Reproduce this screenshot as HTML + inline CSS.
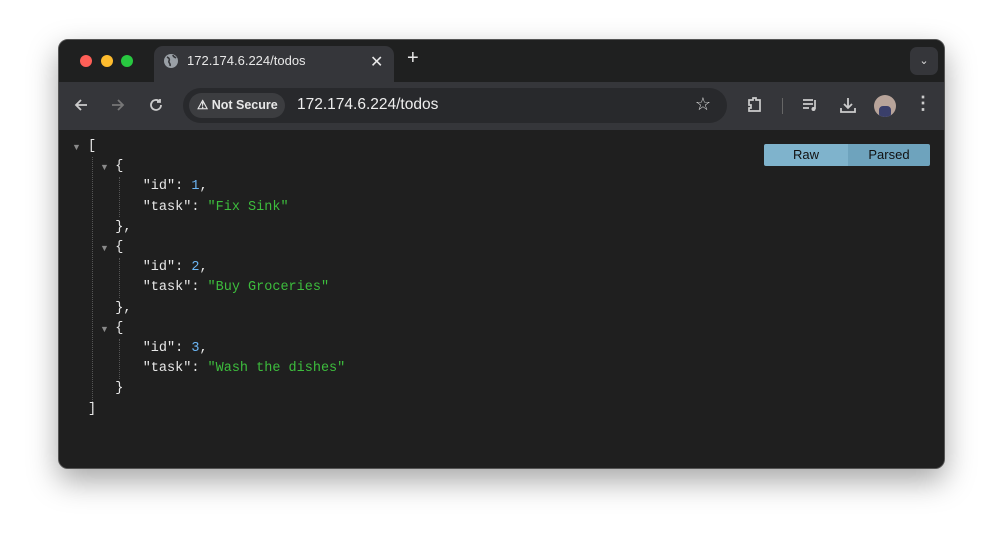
<!DOCTYPE html><html><head><style>
body{margin:0;width:1003px;height:546px;background:#fff;position:relative;overflow:hidden;font-family:"Liberation Sans",sans-serif}
.win{position:absolute;left:58px;top:39px;width:887px;height:430px;border-radius:10px;background:#1f1f1f;overflow:hidden;box-shadow:0 12px 30px rgba(0,0,0,.35);border:1px solid #555;box-sizing:border-box}
.tabbar{position:absolute;left:0;top:0;right:0;height:42px;background:#1f2020}
.dot{position:absolute;top:15px;width:12px;height:12px;border-radius:50%}
.tab{position:absolute;left:95px;top:6px;width:240px;height:36px;background:#35363a;border-radius:9px 9px 0 0;color:#e8e8e8;font-size:13px}
.tool{position:absolute;left:0;top:42px;right:0;height:48px;background:#35363a}
.omni{position:absolute;left:124px;top:6px;width:544px;height:35px;border-radius:18px;background:#28292c}
.ns{position:absolute;left:6px;top:5px;width:96px;height:25px;border-radius:13px;background:#3c3d40;color:#e8e8e8;font-size:12.5px;font-weight:bold;line-height:25px}
.content{position:absolute;left:0;top:90px;right:0;bottom:0;background:#1f1f1f}
pre{margin:0;position:absolute;left:29px;top:7px;font-family:"Liberation Mono",monospace;font-size:13.5px;line-height:20.2px;color:#e8e8e8}
.n{color:#6cb6f5}.s{color:#3dbd3d}
.tri{position:absolute;color:#8a8a8a;font-size:9px}
.vl{position:absolute;border-left:1px dotted #555}
.btn{position:absolute;top:14px;height:22px;background:#6ea3bd;color:#111;font-size:13px;line-height:22px;text-align:center}
svg{position:absolute}
</style></head><body>
<div class="win">
<div class="tabbar">
<div class="dot" style="left:21px;background:#fe5f57"></div>
<div class="dot" style="left:42px;background:#febc2e"></div>
<div class="dot" style="left:62px;background:#28c840"></div>
<div class="tab">
<svg style="left:9px;top:7px" width="16" height="16" viewBox="0 0 16 16"><circle cx="8" cy="8" r="7" fill="#9aa0a6"/><path d="M4 4c2 1 3 2 2 4s2 2 1 5M10 2c0 2 2 2 3 3" stroke="#35363a" stroke-width="1.6" fill="none"/></svg>
<span style="position:absolute;left:33px;top:7px">172.174.6.224/todos</span>
<span style="position:absolute;left:216px;top:6px;font-size:16px">✕</span>
</div>
<span style="position:absolute;left:348px;top:7px;color:#e8e8e8;font-size:20px">+</span>
<div style="position:absolute;left:851px;top:7px;width:28px;height:28px;border-radius:7px;background:#35363a;color:#ddd;text-align:center;font-size:11px;line-height:28px">&#8964;</div>
</div>
<div class="tool">
<svg style="left:14px;top:15px" width="16" height="16" viewBox="0 0 16 16"><path d="M14 8H3M8 3L3 8l5 5" stroke="#ccc" stroke-width="1.8" fill="none"/></svg>
<svg style="left:51px;top:15px" width="16" height="16" viewBox="0 0 16 16"><path d="M2 8h11M8 3l5 5-5 5" stroke="#777" stroke-width="1.8" fill="none"/></svg>
<svg style="left:89px;top:15px" width="16" height="16" viewBox="0 0 16 16"><path d="M13 8a5 5 0 1 1-1.5-3.6M12 2v3H9" stroke="#ccc" stroke-width="1.8" fill="none"/></svg>
<div class="omni"><div class="ns"><span style="margin-left:8px">⚠</span> Not Secure</div>
<span style="position:absolute;left:114px;top:8px;color:#eee;font-size:15.5px">172.174.6.224/todos</span>
<span style="position:absolute;right:16px;top:6px;color:#ddd;font-size:18px">☆</span></div>
<svg style="left:686px;top:13px" width="20" height="20" viewBox="0 0 20 20"><path d="M4 5h4V3h3v2h4v11H4v-3h2v-3H4z" stroke="#ccc" stroke-width="1.7" fill="none"/></svg>
<div style="position:absolute;left:723px;top:16px;width:1px;height:16px;background:#666"></div>
<svg style="left:742px;top:14px" width="18" height="18" viewBox="0 0 18 18"><path d="M2 4h10M2 8h10M2 12h6M14 4v9" stroke="#ccc" stroke-width="1.7" fill="none"/><circle cx="12.5" cy="13" r="2" fill="#ccc"/></svg>
<svg style="left:779px;top:13px" width="20" height="20" viewBox="0 0 20 20"><path d="M10 3v10M6 9l4 4 4-4M3 13v4h14v-4" stroke="#ccc" stroke-width="1.8" fill="none"/></svg>
<div style="position:absolute;left:815px;top:13px;width:22px;height:22px;border-radius:50%;background:#b8a49a;overflow:hidden"><div style="position:absolute;left:5px;top:11px;width:12px;height:12px;background:#3a3f6a;border-radius:4px"></div></div>
<span style="position:absolute;left:855px;top:11px;color:#ccc;font-size:18px;font-weight:bold">⋮</span>
</div>
<div class="content">
<div class="btn" style="left:705px;width:84px;border-radius:2px 0 0 2px;background:#7fb3cc">Raw</div>
<div class="btn" style="left:789px;width:82px;border-radius:0 2px 2px 0">Parsed</div>
<span class="tri" style="left:13px;top:12px">▼</span>
<span class="tri" style="left:41px;top:32px">▼</span>
<span class="tri" style="left:41px;top:113px">▼</span>
<span class="tri" style="left:41px;top:194px">▼</span>
<div class="vl" style="left:33px;top:27px;height:253px"></div>
<div class="vl" style="left:60px;top:47px;height:40px"></div>
<div class="vl" style="left:60px;top:128px;height:40px"></div>
<div class="vl" style="left:60px;top:209px;height:40px"></div>
<pre>[
<span style="margin-left:3px"></span>   {
<span style="margin-left:-2px"></span>       "id": <span class="n">1</span>,
<span style="margin-left:-2px"></span>       "task": <span class="s">"Fix Sink"</span>
<span style="margin-left:3px"></span>   },
<span style="margin-left:3px"></span>   {
<span style="margin-left:-2px"></span>       "id": <span class="n">2</span>,
<span style="margin-left:-2px"></span>       "task": <span class="s">"Buy Groceries"</span>
<span style="margin-left:3px"></span>   },
<span style="margin-left:3px"></span>   {
<span style="margin-left:-2px"></span>       "id": <span class="n">3</span>,
<span style="margin-left:-2px"></span>       "task": <span class="s">"Wash the dishes"</span>
<span style="margin-left:3px"></span>   }
]</pre>
</div>
</div>
</body></html>
